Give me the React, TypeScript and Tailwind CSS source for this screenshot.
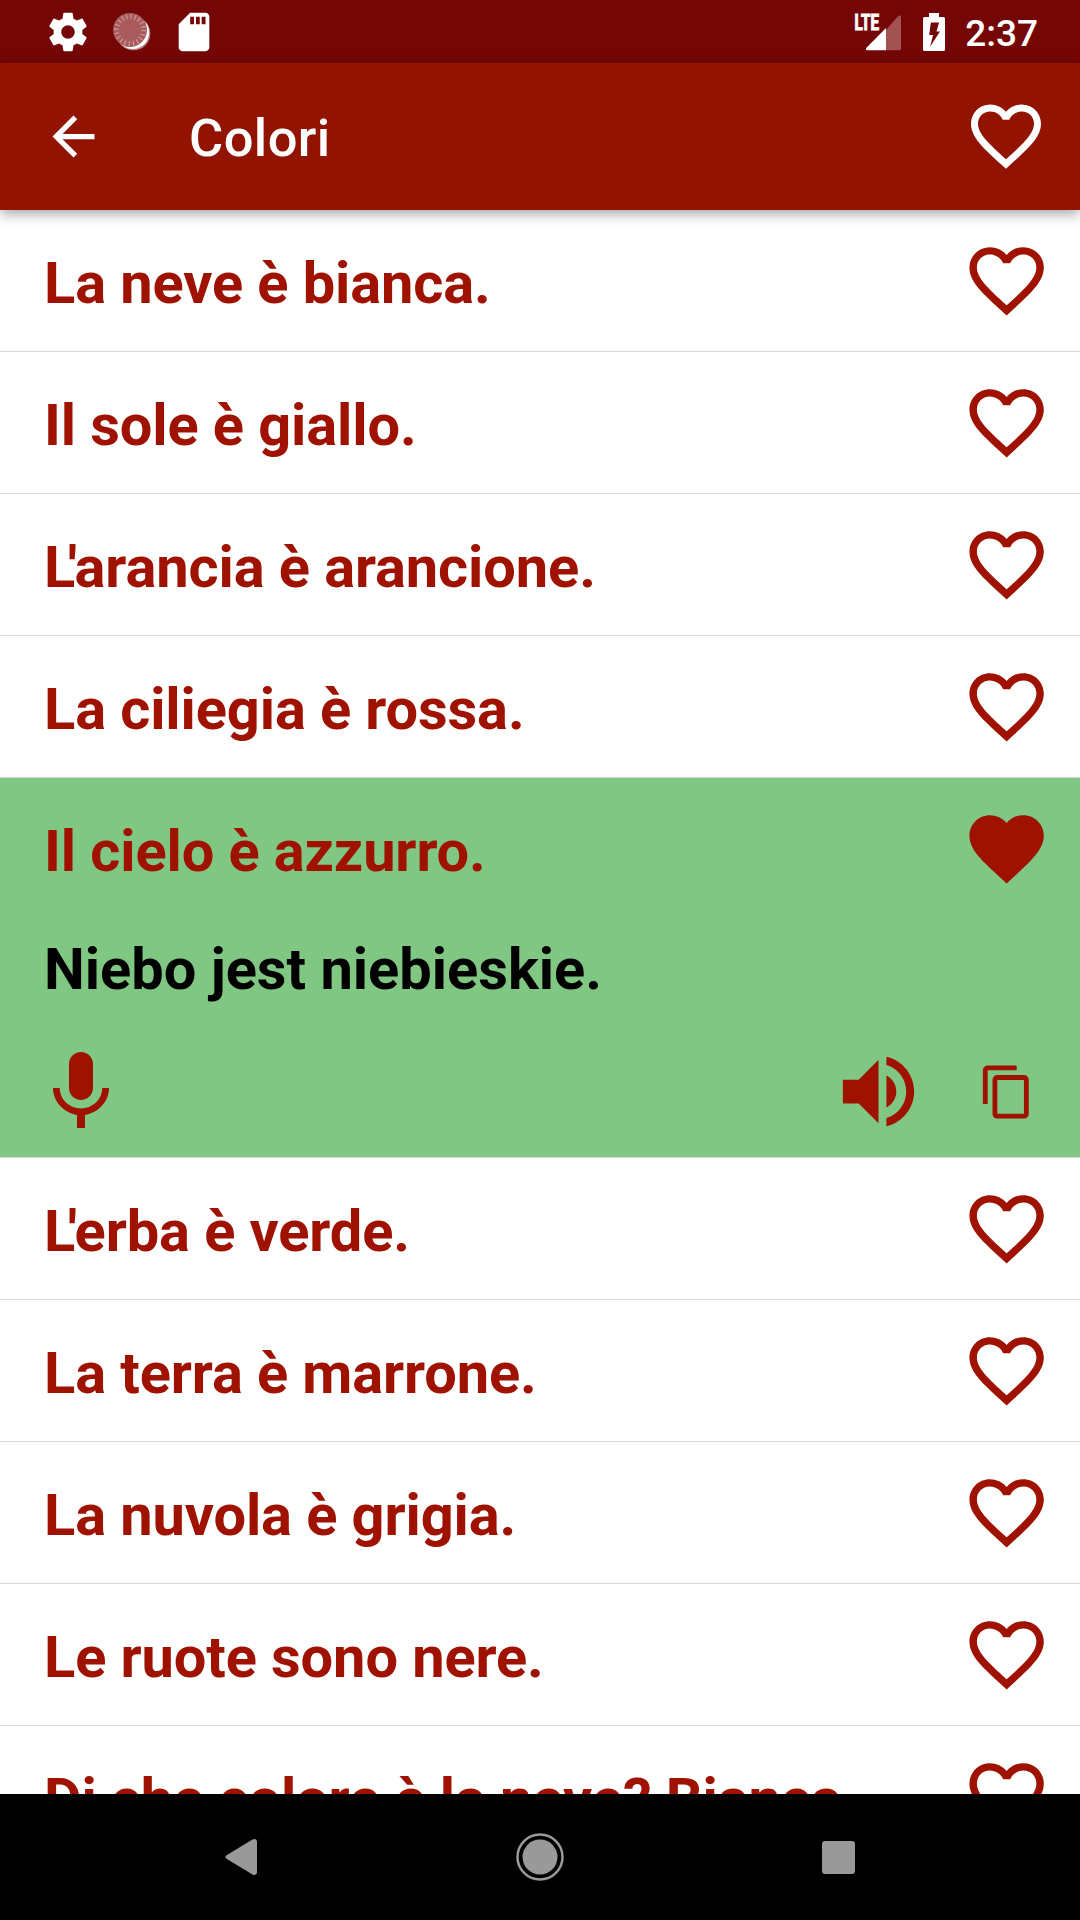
import clsx from "clsx";
import { useState } from "react";

type Phrase = {
  id: number;
  text: string;
  translation: string;
};

const phrases: Phrase[] = [
  { id: 1, text: "La neve è bianca.", translation: "" },
  { id: 2, text: "Il sole è giallo.", translation: "" },
  { id: 3, text: "L'arancia è arancione.", translation: "" },
  { id: 4, text: "La ciliegia è rossa.", translation: "" },
  { id: 5, text: "Il cielo è azzurro.", translation: "Niebo jest niebieskie." },
  { id: 6, text: "L'erba è verde.", translation: "" },
  { id: 7, text: "La terra è marrone.", translation: "" },
  { id: 8, text: "La nuvola è grigia.", translation: "" },
  { id: 9, text: "Le ruote sono nere.", translation: "" },
  { id: 10, text: "Di che colore è la neve? Bianca.", translation: "" },
];

// Material icon paths, all on a 24x24 grid
const icons = {
  settings:
    "M19.43 12.98c.04-.32.07-.64.07-.98s-.03-.66-.07-.98l2.11-1.65c.19-.15.24-.42.12-.64l-2-3.46c-.12-.22-.39-.3-.61-.22l-2.49 1c-.52-.4-1.08-.73-1.69-.98l-.38-2.65C14.46 2.18 14.25 2 14 2h-4c-.25 0-.46.18-.49.42l-.38 2.65c-.61.25-1.17.59-1.69.98l-2.49-1c-.23-.09-.49 0-.61.22l-2 3.46c-.13.22-.07.49.12.64l2.11 1.65c-.04.32-.07.65-.07.98s.03.66.07.98l-2.11 1.65c-.19.15-.24.42-.12.64l2 3.46c.12.22.39.3.61.22l2.49-1c.52.4 1.08.73 1.69.98l.38 2.65c.03.24.24.42.49.42h4c.25 0 .46-.18.49-.42l.38-2.65c.61-.25 1.17-.59 1.69-.98l2.49 1c.23.09.49 0 .61-.22l2-3.46c.12-.22.07-.49-.12-.64l-2.11-1.65zM12 15.5c-1.93 0-3.5-1.57-3.5-3.5s1.57-3.5 3.5-3.5 3.5 1.57 3.5 3.5-1.57 3.5-3.5 3.5z",
  sdCard:
    "M18 2h-8L4.02 8 4 20c0 1.1.9 2 2 2h12c1.1 0 2-.9 2-2V4c0-1.1-.9-2-2-2zm-6 6h-2V4h2v4zm3 0h-2V4h2v4zm3 0h-2V4h2v4z",
  back: "M20 11H7.83l5.59-5.59L12 4l-8 8 8 8 1.41-1.41L7.83 13H20v-2z",
  heart:
    "M12 21.35l-1.45-1.32C5.4 15.36 2 12.28 2 8.5 2 5.42 4.42 3 7.5 3c1.74 0 3.41.81 4.5 2.09C13.09 3.81 14.76 3 16.5 3 19.58 3 22 5.42 22 8.5c0 3.78-3.4 6.86-8.55 11.54L12 21.35z",
  heartBorder:
    "M16.5 3c-1.74 0-3.41.81-4.5 2.09C10.91 3.81 9.24 3 7.5 3 4.42 3 2 5.42 2 8.5c0 3.78 3.4 6.86 8.55 11.54L12 21.35l1.45-1.32C18.6 15.36 22 12.28 22 8.5 22 5.42 19.58 3 16.5 3zm-4.4 15.55l-.1.1-.1-.1C7.14 14.24 4 11.39 4 8.5 4 6.5 5.5 5 7.5 5c1.54 0 3.04.99 3.57 2.36h1.87C13.46 5.99 14.96 5 16.5 5c2 0 3.5 1.5 3.5 3.5 0 2.89-3.14 5.74-7.9 10.05z",
  mic: "M12 14c1.66 0 2.99-1.34 2.99-3L15 5c0-1.66-1.34-3-3-3S9 3.34 9 5v6c0 1.66 1.34 3 3 3zm5.3-3c0 3-2.54 5.1-5.3 5.1S6.7 14 6.7 11H5c0 3.41 2.72 6.23 6 6.72V21h2v-3.28c3.28-.48 6-3.3 6-6.72h-1.7z",
  volume:
    "M3 9v6h4l5 5V4L7 9H3zm13.5 3c0-1.77-1.02-3.29-2.5-4.03v8.05c1.48-.73 2.5-2.25 2.5-4.02zM14 3.23v2.06c2.89.86 5 3.54 5 6.71s-2.11 5.85-5 6.71v2.06c4.01-.91 7-4.49 7-8.77s-2.99-7.86-7-8.77z",
  copy: "M16 1H4c-1.1 0-2 .9-2 2v14h2V3h12V1zm3 4H8c-1.1 0-2 .9-2 2v14c0 1.1.9 2 2 2h11c1.1 0 2-.9 2-2V7c0-1.1-.9-2-2-2zm0 16H8V7h11v14z",
};

const Icon = ({
  name,
  className,
}: {
  name: keyof typeof icons;
  className?: string;
}) => (
  <svg
    viewBox="0 0 24 24"
    fill="currentColor"
    className={clsx("shrink-0", className)}
  >
    <path d={icons[name]} />
  </svg>
);

// Sync spinner: pale disc with ticks and a bright crescent behind it
const SpinnerIcon = () => (
  <svg viewBox="0 0 38 38" className="ml-[22px] size-[38px] shrink-0">
    <circle cx="20.5" cy="20.5" r="16.8" fill="#b97f81" />
    <circle cx="19.7" cy="19.7" r="16.4" fill="#fff" />
    <circle cx="17" cy="17" r="17" fill="#a85a5c" />
    <circle
      cx="17"
      cy="17"
      r="13.5"
      fill="none"
      stroke="#c99a9b"
      strokeWidth="5"
      strokeDasharray="1.2 3.041"
    />
  </svg>
);

const SignalIcon = () => (
  <svg viewBox="0 0 48 40" className="h-[40px] w-[48px] shrink-0 overflow-visible">
    <path d="M47 5v31.500a1.800 1.800 0 0 1-1.800 1.800H32V18L44 4.300Q47 2.500 47 5z" fill="#a35254" />
    <path d="M32 16v22.300H13q-2-.8-.8-2.400z" fill="#fff" />
    <text
      x="0.500"
      y="18"
      fill="#fff"
      stroke="#fff"
      strokeWidth="1.100"
      fontFamily="Roboto"
      fontWeight="700"
      fontSize="22"
      textLength="24.500"
      lengthAdjust="spacingAndGlyphs"
    >
      LTE
    </text>
  </svg>
);

const BatteryIcon = () => (
  <svg viewBox="0 0 22 38" className="ml-[21px] h-[38px] w-[22px] shrink-0">
    <path
      fill="#fff"
      fillRule="evenodd"
      d="M6 0h10v4h4.500A1.500 1.500 0 0 1 22 5.500v31a1.500 1.500 0 0 1-1.500 1.500h-19A1.500 1.500 0 0 1 0 36.500v-31A1.500 1.500 0 0 1 1.500 4H6zM7.800 9.500 6.200 22h3.900L7.200 33.500 17 18.500h-3.500L16 9.500z"
    />
  </svg>
);

const StatusBar = () => (
  <div className="flex h-[63px] shrink-0 items-center bg-[#750606] pl-[45px] pr-[42px] text-white">
    <Icon name="settings" className="size-[46px]" />
    <SpinnerIcon />
    <Icon name="sdCard" className="ml-[20px] size-[46px]" />
    <div className="ml-auto flex items-center">
      <SignalIcon />
      <BatteryIcon />
      <span className="ml-[20px] mt-[4px] text-[37px] leading-none font-medium">
        2:37
      </span>
    </div>
  </div>
);

const AppBar = () => (
  <header className="z-10 flex h-[147px] shrink-0 items-center bg-[#911300] pr-[32px] pl-[42px] text-white shadow-[0_4px_12px_rgba(0,0,0,0.35)]">
    <Icon name="back" className="size-[63px]" />
    <h1 className="mt-[3px] ml-[84px] text-[52.5px] leading-[54px] font-medium tracking-[0.4px]">
      Colori
    </h1>
    <Icon name="heartBorder" className="mb-[2px] ml-auto size-[84px]" />
  </header>
);

// Pulls the apostrophe of an elided article in under the L
const PhraseText = ({ text }: { text: string }) => {
  if (!text.startsWith("L'")) return <>{text}</>;

  return (
    <>
      <span className="tracking-[-7.5px]">L</span>
      <span className="tracking-[-2.5px]">'</span>
      {text.slice(2)}
    </>
  );
};

const PhraseRow = ({
  phrase,
  open,
  favorite,
  onOpen,
  onFavorite,
}: {
  phrase: Phrase;
  open: boolean;
  favorite: boolean;
  onOpen: () => void;
  onFavorite: () => void;
}) => (
  <li
    className={clsx(
      "shrink-0 border-b border-[#d6d6d6] text-[#a01200]",
      open ? "h-[380px] bg-[#81c784]" : "h-[142px] bg-white"
    )}
  >
    <div className="flex h-[141px] items-center justify-between pr-[29px] pl-[44px]">
      <button
        onClick={onOpen}
        className="mt-[4px] text-[57.75px] leading-[68px] font-bold tracking-[-0.1px] whitespace-nowrap"
      >
        <PhraseText text={phrase.text} />
      </button>
      <button onClick={onFavorite}>
        <Icon
          name={favorite ? "heart" : "heartBorder"}
          className="size-[89.25px]"
        />
      </button>
    </div>
    {open && (
      <>
        <p className="mt-[16px] pl-[44px] text-[57.75px] leading-[68px] font-bold text-black">
          {phrase.translation}
        </p>
        <div className="mt-[40.5px] flex h-[96px] items-center pr-[44px] pl-[33px]">
          <Icon name="mic" className="size-[96px]" />
          <Icon name="volume" className="ml-auto size-[95px]" />
          <Icon name="copy" className="ml-[52px] size-[58px]" />
        </div>
      </>
    )}
  </li>
);

const NavBar = () => (
  <nav className="flex h-[126px] shrink-0 items-center justify-between bg-black pr-[225px] pl-[225px]">
    <svg viewBox="0 0 33 38" className="h-[38px] w-[33px]" fill="#999">
      <path d="M1.500 17.200 27.500 1.600Q31.500 0 32 3.500v31q-.5 3.500-4.500 1.900L1.500 20.800q-2.400-1.800 0-3.600z" />
    </svg>
    <svg viewBox="0 0 48 48" className="mb-[1px] size-[48px]" fill="#999">
      <circle cx="24" cy="24" r="17.500" />
      <circle cx="24" cy="24" r="22.500" fill="none" stroke="#999" strokeWidth="2.500" />
    </svg>
    <div className="size-[33px] rounded-[3px] bg-[#999]" />
  </nav>
);

const App = () => {
  const [openId, setOpenId] = useState(5);
  const [favorites, setFavorites] = useState<number[]>([5]);

  const toggleFavorite = (id: number) => {
    setFavorites((prev) =>
      prev.includes(id) ? prev.filter((item) => item !== id) : [...prev, id]
    );
  };

  return (
    <div className="flex h-[1920px] w-[1080px] flex-col overflow-hidden bg-white font-['Roboto',sans-serif]">
      <StatusBar />
      <AppBar />
      <ul className="flex min-h-0 flex-1 flex-col overflow-hidden">
        {phrases.map((phrase) => (
          <PhraseRow
            key={phrase.id}
            phrase={phrase}
            open={openId === phrase.id}
            favorite={favorites.includes(phrase.id)}
            onOpen={() => setOpenId(phrase.id)}
            onFavorite={() => toggleFavorite(phrase.id)}
          />
        ))}
      </ul>
      <NavBar />
    </div>
  );
};

export default App;
